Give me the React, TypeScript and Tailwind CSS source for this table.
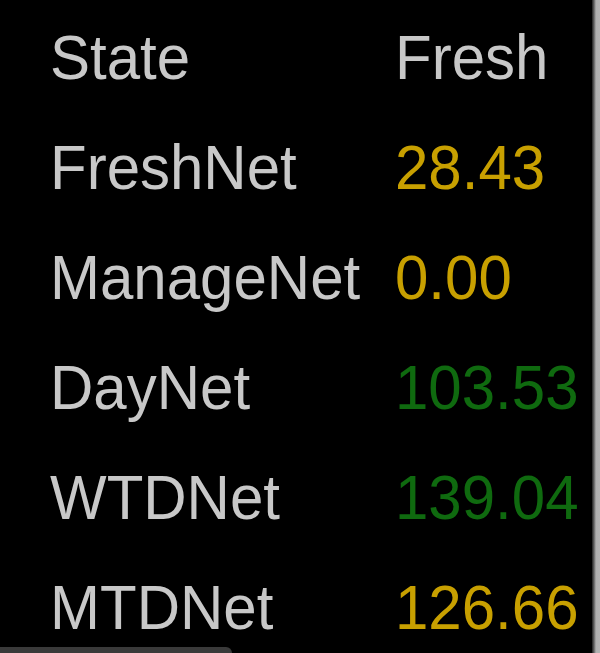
import React from "react";

const rows: { label: string; value: string; color: string }[] = [
  { label: "FreshNet", value: "28.43", color: "text-[#c8a000]" },
  { label: "ManageNet", value: "0.00", color: "text-[#c8a000]" },
  { label: "DayNet", value: "103.53", color: "text-[#0f6a0f]" },
  { label: "WTDNet", value: "139.04", color: "text-[#0f6a0f]" },
  { label: "MTDNet", value: "126.66", color: "text-[#c8a000]" },
];

export default function App() {
  return (
    <div
      className="flex h-[653px] w-[600px] overflow-hidden bg-black"
      style={{ fontFamily: '"Liberation Sans", Arial, sans-serif' }}
    >
      <div className="flex min-w-0 flex-1 flex-col">
        <div className="flex-1 overflow-hidden pl-[50px] pt-[3px]">
          <div className="grid grid-cols-[345px_auto] text-[60px] leading-[110px]">
            <div className="scale-y-[1.06] text-[#c8c8c8]">State</div>
            <div className="scale-y-[1.06] text-[#c8c8c8]">Fresh</div>
            {rows.map((r) => (
              <React.Fragment key={r.label}>
                <div className="scale-y-[1.06] text-[#c8c8c8]">{r.label}</div>
                <div className={`scale-y-[1.06] ${r.color}`}>{r.value}</div>
              </React.Fragment>
            ))}
          </div>
        </div>
        <div className="h-[6px] w-[232px] rounded-tr-[6px] bg-[#3a3a3a]" />
      </div>
      <div className="w-[8px] bg-gradient-to-r from-[#202020] via-[#b0b0b0] to-[#b4b4b4]" />
    </div>
  );
}
